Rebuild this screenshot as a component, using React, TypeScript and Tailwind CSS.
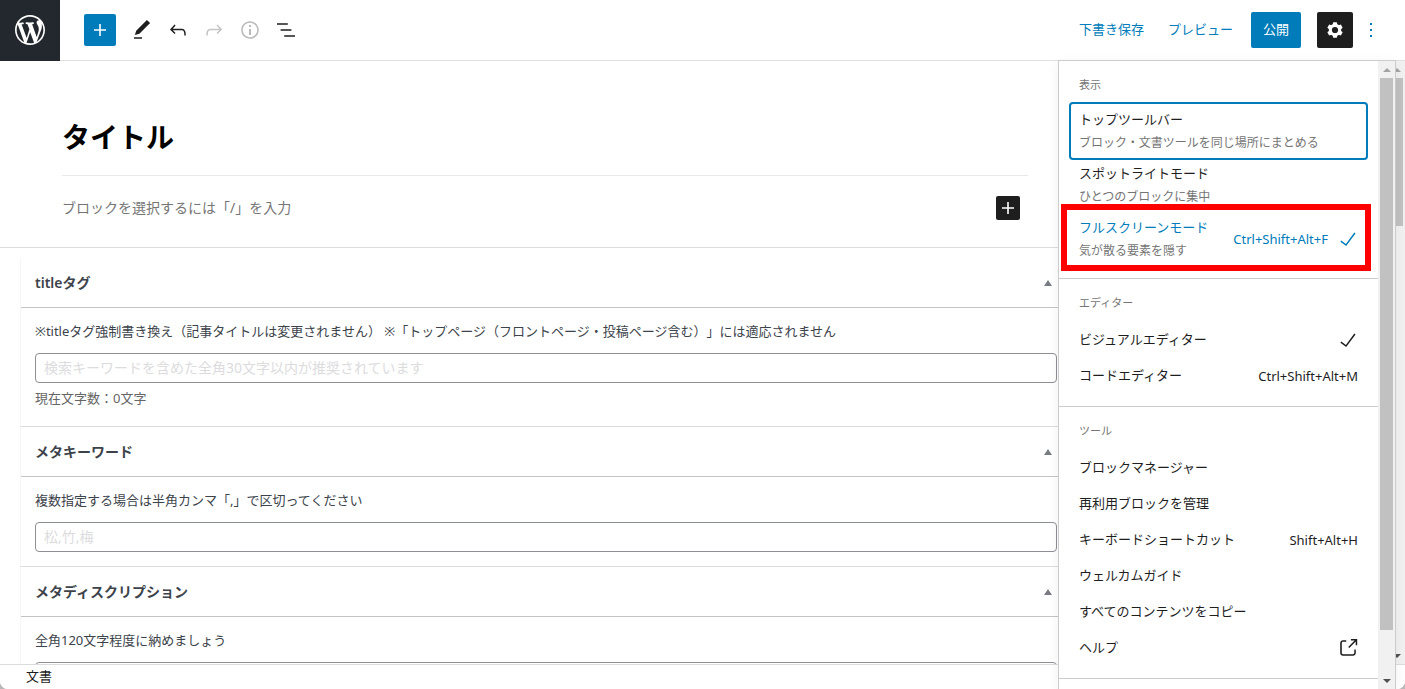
import type { ReactNode } from "react";

function WordPressLogo() {
  return (
    <svg viewBox="-2 -2 24 24" className="block h-9 w-9 fill-current" aria-hidden="true">
      <path d="M20 10c0-5.51-4.49-10-10-10C4.48 0 0 4.49 0 10c0 5.52 4.48 10 10 10 5.51 0 10-4.48 10-10zM7.78 15.37L4.37 6.22c.55-.02 1.17-.08 1.17-.08.5-.06.44-1.13-.06-1.11 0 0-1.45.11-2.37.11-.18 0-.37 0-.58-.01C4.12 2.69 6.87 1.11 10 1.11c2.33 0 4.45.87 6.05 2.34-.68-.11-1.65.39-1.65 1.58 0 .74.45 1.36.9 2.1.35.61.55 1.36.55 2.46 0 1.49-1.4 5-1.4 5l-3.03-8.37c.54-.02.82-.17.82-.17.5-.05.44-1.25-.06-1.22 0 0-1.44.12-2.38.12-.87 0-2.33-.12-2.33-.12-.5-.03-.56 1.2-.06 1.22l.92.08 1.26 3.41zM17.41 10c.24-.64.74-1.87.43-4.25.7 1.29 1.05 2.71 1.05 4.25 0 3.29-1.73 6.24-4.4 7.78.97-2.59 1.94-5.2 2.92-7.78zM6.1 18.09C3.12 16.65 1.11 13.53 1.11 10c0-1.3.23-2.48.72-3.59C3.25 10.3 4.67 14.2 6.1 18.09zm4.03-6.63l2.58 6.98c-.86.29-1.76.45-2.71.45-.79 0-1.57-.11-2.29-.33.81-2.38 1.62-4.74 2.42-7.1z" />
    </svg>
  );
}

function Icon({ d }: { d: string }) {
  return (
    <svg viewBox="0 0 24 24" className="block h-6 w-6 fill-current" aria-hidden="true">
      <path fillRule="evenodd" clipRule="evenodd" d={d} />
    </svg>
  );
}

const PLUS = "M18 11.2h-5.2V6h-1.6v5.2H6v1.6h5.2V18h1.6v-5.2H18z";
const EDIT =
  "M20.1 5.1L16.9 2 6.2 12.7l-1.3 4.4 4.5-1.3L20.1 5.1zM4 20.8h8v-1.5H4v1.5z";
const UNDO =
  "M18.3 11.7c-.6-.6-1.4-.9-2.3-.9H6.7l2.9-3.3-1.1-1-4.5 5L8.5 16l1-1-2.7-2.7H16c.5 0 .9.2 1.3.5 1 1 1 3.4 1 4.5v.3h1.5v-.2c0-1.5 0-4.3-1.5-5.7z";
const REDO =
  "M15.6 6.5l-1.1 1 2.9 3.3H8c-.9 0-1.7.3-2.3.9-1.4 1.5-1.4 4.2-1.4 5.6v.2h1.5v-.3c0-1.1 0-3.5 1-4.5.3-.3.7-.5 1.3-.5h9.2L14.5 15l1.1 1.1 4.6-4.6-4.6-5z";
const INFO =
  "M12 3.2c-4.8 0-8.8 3.9-8.8 8.8 0 4.8 3.9 8.8 8.8 8.8 4.8 0 8.8-3.9 8.8-8.8 0-4.8-4-8.8-8.8-8.8zm0 16c-4 0-7.2-3.3-7.2-7.2C4.8 8 8 4.8 12 4.8s7.2 3.3 7.2 7.2c0 4-3.2 7.2-7.2 7.2zM11 17h2v-6h-2v6zm0-8h2V7h-2v2z";
const LIST =
  "M13.8 5.2H3v1.5h10.8V5.2zm-3.6 12v1.5H21v-1.5H10.2zm7.2-6H6.6v1.5h10.8v-1.5z";
const MORE =
  "M13 19h-2v-2h2v2zm0-6h-2v-2h2v2zm0-6h-2V5h2v2z";
const CHECK =
  "M18.3 5.6L9.9 16.9l-4.6-3.4-.9 1.2 5.8 4.3 9.3-12.6z";
const EXTERNAL =
  "M18.2 17c0 .7-.6 1.2-1.2 1.2H7c-.7 0-1.2-.6-1.2-1.2V7c0-.7.6-1.2 1.2-1.2h3.2V4.2H7C5.5 4.2 4.2 5.5 4.2 7v10c0 1.5 1.2 2.8 2.8 2.8h10c1.5 0 2.8-1.2 2.8-2.8v-3.6h-1.5V17zM14.9 3v1.5h3.7l-6.4 6.4 1.1 1.1 6.4-6.4v3.7h1.5V3h-6.3z";

function GearIcon() {
  return (
    <svg viewBox="0 0 24 24" className="block h-6 w-6" aria-hidden="true">
      <g className="fill-current">
        <circle cx="12" cy="12" r="6.2" />
        {[0, 60, 120].map((a) => (
          <path key={a} d="M10.2 4.2h3.6l.8 3.8v8l-.8 3.8h-3.6L9.4 16V8z" transform={`rotate(${a} 12 12)`} />
        ))}
      </g>
      <circle cx="12" cy="12" r="3.1" className="fill-[#1e1e1e]" />
    </svg>
  );
}

function ToolButton({ label, d, tone = "text-[#1e1e1e]" }: { label: string; d: string; tone?: string }) {
  return (
    <button type="button" aria-label={label} className={`flex h-9 w-9 items-center justify-center ${tone}`}>
      <Icon d={d} />
    </button>
  );
}

function Header() {
  return (
    <header className="flex h-[61px] shrink-0 items-center border-b border-[#e0e0e0] bg-white">
      <a href="#posts" aria-label="投稿一覧を表示" className="flex h-[61px] w-[60px] items-center justify-center bg-[#23282e] text-white">
        <WordPressLogo />
      </a>
      <div className="flex flex-1 items-center pl-6">
        <button type="button" aria-label="ブロックを追加" className="mr-2 flex h-8 w-8 items-center justify-center rounded-xs bg-[#007cba] text-white">
          <Icon d={PLUS} />
        </button>
        <ToolButton label="ツール選択" d={EDIT} />
        <ToolButton label="元に戻す" d={UNDO} />
        <ToolButton label="やり直す" d={REDO} tone="text-[#c4c4c4]" />
        <ToolButton label="詳細" d={INFO} tone="text-[#bbbbbb]" />
        <ToolButton label="リスト表示" d={LIST} />
      </div>
      <div className="flex items-center pr-4 text-[13px] text-[#007cba]">
        <button type="button" className="mr-6">下書き保存</button>
        <button type="button" className="mr-[18px]">プレビュー</button>
        <button type="button" className="mr-4 h-9 rounded-xs bg-[#007cba] px-3 text-white">公開</button>
        <button type="button" aria-label="設定" className="flex h-9 w-9 items-center justify-center rounded-xs bg-[#1e1e1e] text-white">
          <GearIcon />
        </button>
        <button type="button" aria-label="オプション" className="flex h-9 w-9 items-center justify-center">
          <Icon d={MORE} />
        </button>
      </div>
    </header>
  );
}

function Panel({ title, children }: { title: string; children: ReactNode }) {
  return (
    <section className="border-b border-l border-b-[#dcdcde] border-l-[#f6f6f7]">
      <div className="flex h-[50px] items-center justify-between border-b border-[#c3c4c7] pr-[19px] pl-[14px]">
        <h2 className="text-sm leading-5 font-semibold text-[#3c434a]">{title}</h2>
        <button type="button" aria-label={`${title}を閉じる`} className="text-[#787c82]">
          <svg viewBox="0 0 8 6" className="block h-[6px] w-2 fill-current" aria-hidden="true">
            <path d="M4 0l4 6H0z" />
          </svg>
        </button>
      </div>
      <div className="px-[14px] pt-[14px] pb-[14px] text-[13px] leading-[18px] text-[#3c434a]">{children}</div>
    </section>
  );
}

const field =
  "mt-[13px] block h-[30px] w-full rounded-[4px] border border-[#8c8f94] px-2 pb-[2px] text-sm placeholder:text-[#dcdcde]";

function Editor() {
  return (
    <main className="min-w-0 flex-1 overflow-hidden bg-white">
      <div className="h-[187px] border-b border-[#dcdcde] pr-[43px] pl-[62px]">
        <h1 className="border-b border-[#e8e8e8] pt-[55px] pb-[17px] text-[28px] leading-[42px] font-bold text-black">タイトル</h1>
        <div className="flex items-center justify-between pt-5 pr-2">
          <p className="text-sm text-[#757575]">ブロックを選択するには「/」を入力</p>
          <button type="button" aria-label="ブロックを追加" className="flex h-6 w-6 items-center justify-center rounded-xs bg-[#1e1e1e] text-white">
            <Icon d={PLUS} />
          </button>
        </div>
      </div>
      <div className="pt-[10px] pl-5">
        <Panel title="titleタグ">
          <label htmlFor="seo-title" className="block">
            ※titleタグ強制書き換え（記事タイトルは変更されません） ※「トップページ（フロントページ・投稿ページ含む）」には適応されません
          </label>
          <input id="seo-title" type="text" className={field} placeholder="検索キーワードを含めた全角30文字以内が推奨されています" />
          <p className="mt-[6px] mb-[5px] text-[#666666]">現在文字数：0文字</p>
        </Panel>
        <Panel title="メタキーワード">
          <label htmlFor="seo-keyword" className="block">複数指定する場合は半角カンマ「,」で区切ってください</label>
          <input id="seo-keyword" type="text" className={field} placeholder="松,竹,梅" />
        </Panel>
        <Panel title="メタディスクリプション">
          <label htmlFor="seo-description" className="block">全角120文字程度に納めましょう</label>
          <textarea id="seo-description" className="mt-[13px] block h-24 w-full rounded-[4px] border border-[#8c8f94] px-2 text-sm" />
        </Panel>
      </div>
    </main>
  );
}

function Arrow({ down = false, tone }: { down?: boolean; tone: string }) {
  return (
    <svg viewBox="0 0 8 4" className={`block h-1 w-2 shrink-0 fill-current ${tone}`} aria-hidden="true">
      <path d={down ? "M0 0h8L4 4z" : "M0 4h8L4 0z"} />
    </svg>
  );
}

function Scrollbar({ thumb }: { thumb: string }) {
  return (
    <div aria-hidden="true" className="flex w-[17px] shrink-0 flex-col items-center bg-[#f1f1f1]">
      <div className="flex h-[17px] shrink-0 items-center">
        <Arrow tone="text-[#a3a3a3]" />
      </div>
      <div className="flex min-h-0 w-full flex-1 flex-col items-center">
        <div className={`w-[13px] bg-[#c1c1c1] ${thumb}`} />
      </div>
      <div className="flex h-[17px] shrink-0 items-center">
        <Arrow down tone="text-[#505050]" />
      </div>
    </div>
  );
}

function MenuGroup({ label, children }: { label: string; children?: ReactNode }) {
  return (
    <div role="group" aria-label={label} className="border-b border-[#cccccc] px-3 pt-3 pb-3">
      <div className="mb-[7px] pl-2 text-[11px] leading-6 text-[#757575]">{label}</div>
      {children}
    </div>
  );
}

type ItemProps = {
  label: string;
  info?: string;
  shortcut?: string;
  mark?: string;
  focused?: boolean;
  selected?: boolean;
};

function MenuItem({ label, info, shortcut, mark, focused, selected }: ItemProps) {
  return (
    <button
      type="button"
      role="menuitem"
      className={`relative flex w-full items-center rounded-xs px-2 text-left text-[13px] ${info ? "h-[54px]" : "h-9"} ${
        focused ? "ring-2 ring-[#007cba]" : ""
      } ${selected ? "text-[#007cba]" : "text-[#1e1e1e]"}`}
    >
      <span className="flex flex-1 flex-col">
        <span className={info ? "leading-5" : "pb-[2px] leading-5"}>{label}</span>
        {info && <span className="mt-1 text-xs leading-5 text-[#757575]">{info}</span>}
      </span>
      {shortcut && <span className="leading-5">{shortcut}</span>}
      {mark && (
        <span className={shortcut ? "-mr-[2px] ml-2" : "-mr-[2px]"}>
          <Icon d={mark} />
        </span>
      )}
      {selected && (
        <span aria-hidden="true" className="pointer-events-none absolute -top-[8px] -right-[5px] -bottom-[5px] -left-[10px] border-[6px] border-[#ff0000]" />
      )}
    </button>
  );
}

function OptionsMenu() {
  return (
    <div className="absolute top-[60px] right-[9px] bottom-0 z-10 flex w-[338px] border border-b-0 border-[#cccccc] bg-white shadow-[0_3px_12px_rgba(25,30,35,0.06)]">
      <div role="menu" aria-label="オプション" className="min-w-0 flex-1 overflow-hidden">
        <MenuGroup label="表示">
          <MenuItem label="トップツールバー" info="ブロック・文書ツールを同じ場所にまとめる" focused />
          <MenuItem label="スポットライトモード" info="ひとつのブロックに集中" />
          <MenuItem label="フルスクリーンモード" info="気が散る要素を隠す" shortcut="Ctrl+Shift+Alt+F" mark={CHECK} selected />
        </MenuGroup>
        <MenuGroup label="エディター">
          <MenuItem label="ビジュアルエディター" mark={CHECK} />
          <MenuItem label="コードエディター" shortcut="Ctrl+Shift+Alt+M" />
        </MenuGroup>
        <MenuGroup label="ツール">
          <MenuItem label="ブロックマネージャー" />
          <MenuItem label="再利用ブロックを管理" />
          <MenuItem label="キーボードショートカット" shortcut="Shift+Alt+H" />
          <MenuItem label="ウェルカムガイド" />
          <MenuItem label="すべてのコンテンツをコピー" />
          <MenuItem label="ヘルプ" mark={EXTERNAL} />
        </MenuGroup>
      </div>
      <Scrollbar thumb="h-[93%]" />
    </div>
  );
}

export default function App() {
  return (
    <div className="bg-[#b8b8b8]">
      <div className="relative flex h-screen flex-col overflow-hidden rounded-b-lg bg-white font-['Noto_Sans','Noto_Sans_CJK_JP',sans-serif] [text-spacing-trim:space-all]">
        <Header />
        <div className="flex min-h-0 flex-1">
          <Editor />
          <aside className="flex w-[334px] shrink-0 justify-end border-l border-[#e0e0e0]">
            <Scrollbar thumb="h-[26%]" />
          </aside>
        </div>
        <footer className="flex h-[25px] shrink-0 items-center border-t border-[#dcdcde] bg-white pl-[26px] text-[13px] text-[#1e1e1e]">
          文書
        </footer>
        <OptionsMenu />
      </div>
    </div>
  );
}
